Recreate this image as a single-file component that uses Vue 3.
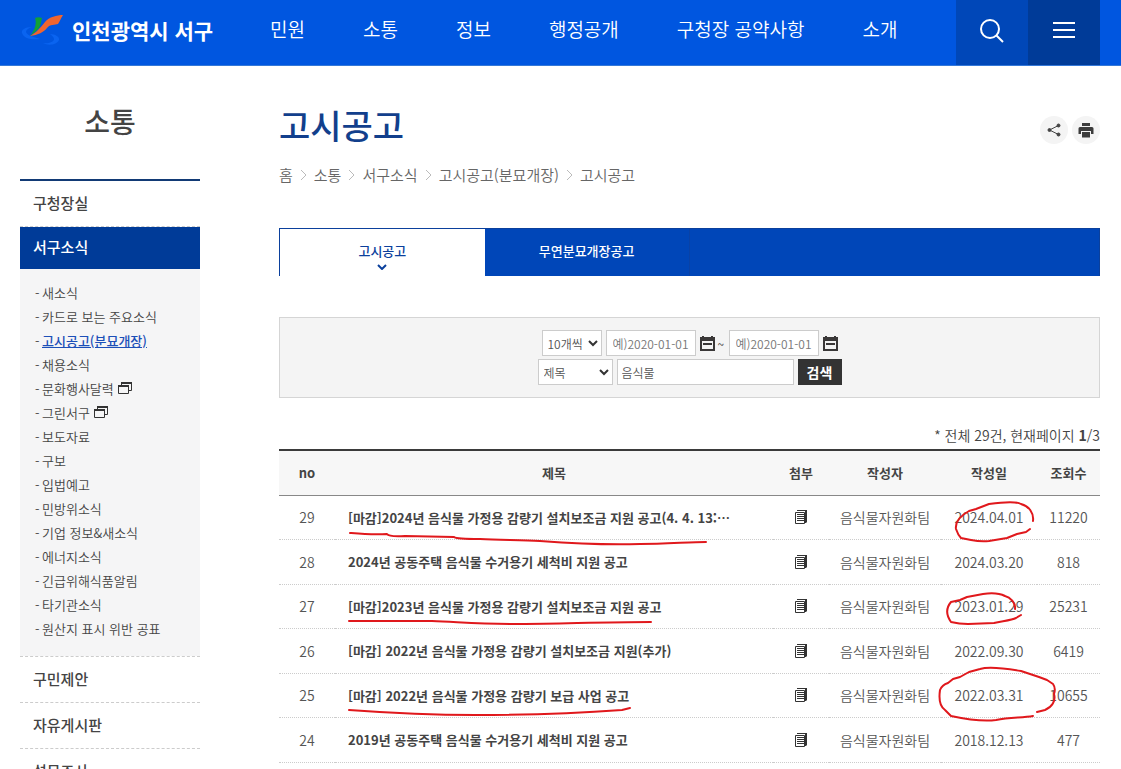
<script setup>
import { ref } from 'vue'

const menus = ['민원', '소통', '정보', '행정공개', '구청장 공약사항', '소개']
const subMenus = [
  { name: '새소식' },
  { name: '카드로 보는 주요소식' },
  { name: '고시공고(분묘개장)', current: true },
  { name: '채용소식' },
  { name: '문화행사달력', external: true },
  { name: '그린서구', external: true },
  { name: '보도자료' },
  { name: '구보' },
  { name: '입법예고' },
  { name: '민방위소식' },
  { name: '기업 정보&새소식' },
  { name: '에너지소식' },
  { name: '긴급위해식품알림' },
  { name: '타기관소식' },
  { name: '원산지 표시 위반 공표' },
]
const crumbs = ['홈', '소통', '서구소식', '고시공고(분묘개장)', '고시공고']
const posts = [
  { no: 29, title: '[마감]2024년 음식물 가정용 감량기 설치보조금 지원 공고(4. 4. 13:…', date: '2024.04.01', hits: 11220 },
  { no: 28, title: '2024년 공동주택 음식물 수거용기 세척비 지원 공고', date: '2024.03.20', hits: 818 },
  { no: 27, title: '[마감]2023년 음식물 가정용 감량기 설치보조금 지원 공고', date: '2023.01.29', hits: 25231 },
  { no: 26, title: '[마감] 2022년 음식물 가정용 감량기 설치보조금 지원(추가)', date: '2022.09.30', hits: 6419 },
  { no: 25, title: '[마감] 2022년 음식물 가정용 감량기 보급 사업 공고', date: '2022.03.31', hits: 10655 },
  { no: 24, title: '2019년 공동주택 음식물 수거용기 세척비 지원 공고', date: '2018.12.13', hits: 477 },
]
const keyword = ref('음식물')
const from = ref('')
const to = ref('')
</script>

<template>
  <div class="page" lang="ko">
    <header class="header">
      <a class="logo" href="#">
        <svg width="44" height="34" viewBox="0 0 44 34" aria-hidden="true">
          <path d="M12 14C5 14 1 17 2 20C4 26 12 27 20 26C15 24 7 23 6 19C6 17 8 15 12 14Z" fill="#0a64f0" />
          <path d="M30 21C35 21 40 24 39 27C37 32 28 33 23 30C28 31 34 29 34 26C34 24 32 23 30 21Z" fill="#0a64f0" />
          <path d="M15 5C17 4 20 4 22 5C21 8 21 12 19 15C16 18 13 21 10 23C15 17 17 10 15 5Z" fill="#12a036" />
          <path d="M43 2C37 2 29 4 25 9C20 15 17 19 10 23C18 22 24 19 27 15C30 11 35 12 38 11C40 8 41 5 43 2Z" fill="#f0652e" />
        </svg>
        <span>인천광역시 서구</span>
      </a>
      <nav class="gnb">
        <a v-for="m in menus" :key="m" href="#">{{ m }}</a>
      </nav>
      <button class="tool search-open" aria-label="검색 열기">
        <svg width="26" height="26" viewBox="0 0 26 26" fill="none" stroke="#fff" stroke-width="2">
          <circle cx="11" cy="11" r="9" />
          <path d="M17 17L24 24" />
        </svg>
      </button>
      <button class="tool menu-open" aria-label="전체메뉴">
        <svg width="22" height="18" viewBox="0 0 22 18" stroke="#fff" stroke-width="2">
          <path d="M0 2H22M0 9H22M0 16H22" />
        </svg>
      </button>
    </header>

    <div class="body">
      <aside class="side">
        <h2>소통</h2>
        <ul class="lnb">
          <li><a href="#">구청장실</a></li>
          <li class="open">
            <a href="#">서구소식</a>
            <ul class="sub">
              <li v-for="s in subMenus" :key="s.name">
                <span class="dash">-</span>
                <a href="#" :class="{ current: s.current }">{{ s.name }}</a>
                <svg v-if="s.external" width="14" height="12" viewBox="0 0 14 12" fill="none" stroke="#333">
                  <path d="M3.500 3V1M13.500 0V8.500H11" />
                  <path d="M3 1H14" stroke-width="2" />
                  <path d="M.5 4V11.500H10.500V4" />
                  <path d="M0 4H11" stroke-width="2" />
                </svg>
              </li>
            </ul>
          </li>
          <li><a href="#">구민제안</a></li>
          <li><a href="#">자유게시판</a></li>
          <li><a href="#">설문조사</a></li>
        </ul>
      </aside>

      <main class="main">
        <div class="heading">
          <h1>고시공고</h1>
          <div class="share">
            <button aria-label="공유">
              <svg width="14" height="14" viewBox="0 0 14 14" fill="#444" stroke="#444">
                <path d="M11.500 2.500L2.500 7L11.500 11.500" fill="none" />
                <circle cx="11.500" cy="2.500" r="1.500" />
                <circle cx="2.500" cy="7" r="1.500" />
                <circle cx="11.500" cy="11.500" r="1.500" />
              </svg>
            </button>
            <button aria-label="인쇄">
              <svg width="16" height="16" viewBox="0 0 16 16" fill="#3c3c3c">
                <path d="M4 1H12V4H4Z" />
                <path d="M2 5H14Q15.500 5 15.500 6.500V12H13V9H3V12H.5V6.500Q.5 5 2 5Z" />
                <path d="M4 10H12V15.500H4Z" />
              </svg>
            </button>
          </div>
        </div>

        <nav class="crumbs" aria-label="현재 위치">
          <template v-for="(c, i) in crumbs" :key="i">
            <svg v-if="i" width="7" height="12" viewBox="0 0 7 12" fill="none" stroke="#bbb">
              <path d="M1 1L6 6L1 11" />
            </svg>
            <a href="#">{{ c }}</a>
          </template>
        </nav>

        <nav class="tabs">
          <a class="on" href="#">
            고시공고
            <svg width="10" height="6" viewBox="0 0 10 6" fill="none" stroke="#0b409c" stroke-width="2">
              <path d="M1 1L5 5L9 1" />
            </svg>
          </a>
          <a href="#">무연분묘개장공고</a>
        </nav>

        <form class="filter" @submit.prevent>
          <div class="line">
            <span class="pick count">
              <select aria-label="목록 개수"><option>10개씩</option></select>
              <svg width="10" height="7" viewBox="0 0 10 7" fill="none" stroke="#333" stroke-width="2"><path d="M1 1L5 5L9 1" /></svg>
            </span>
            <input v-model="from" class="date" type="text" placeholder="예)2020-01-01" aria-label="시작일" />
            <button type="button" class="cal" aria-label="시작일 선택">
              <svg width="15" height="15" viewBox="0 0 15 15"><path d="M0 1H2V0H4V1H11V0H13V1H15V5H0Z" fill="#3a3838" /><path d="M1 4V14H14V4" fill="none" stroke="#3a3838" stroke-width="2" /><path d="M3 8H12" stroke="#3a3838" stroke-width="2" /></svg>
            </button>
            <span class="tilde">~</span>
            <input v-model="to" class="date" type="text" placeholder="예)2020-01-01" aria-label="종료일" />
            <button type="button" class="cal" aria-label="종료일 선택">
              <svg width="15" height="15" viewBox="0 0 15 15"><path d="M0 1H2V0H4V1H11V0H13V1H15V5H0Z" fill="#3a3838" /><path d="M1 4V14H14V4" fill="none" stroke="#3a3838" stroke-width="2" /><path d="M3 8H12" stroke="#3a3838" stroke-width="2" /></svg>
            </button>
          </div>
          <div class="line">
            <span class="pick field">
              <select aria-label="검색 항목"><option>제목</option></select>
              <svg width="10" height="7" viewBox="0 0 10 7" fill="none" stroke="#333" stroke-width="2"><path d="M1 1L5 5L9 1" /></svg>
            </span>
            <input v-model="keyword" class="keyword" type="text" aria-label="검색어" />
            <button class="submit">검색</button>
          </div>
        </form>

        <p class="total">* 전체 29건, 현재페이지 <b>1</b>/3</p>

        <div class="board">
          <table>
            <colgroup>
              <col class="c-no" /><col /><col class="c-file" /><col class="c-dept" /><col class="c-date" /><col class="c-hits" />
            </colgroup>
            <thead>
              <tr><th>no</th><th>제목</th><th>첨부</th><th>작성자</th><th>작성일</th><th>조회수</th></tr>
            </thead>
            <tbody>
              <tr v-for="p in posts" :key="p.no">
                <td>{{ p.no }}</td>
                <td class="title"><a href="#">{{ p.title }}</a></td>
                <td>
                  <svg class="file" width="12" height="14" viewBox="0 0 12 14" fill="none" stroke="#333">
                    <path d="M2.500 .5H11.500V12.500" />
                    <path d="M.5 2.500H9.500V13.500H.5Z" />
                    <path d="M2 .5H12M10.500 1V13M2 4.500H9M2 6.500H9M2 8.500H9M2 10.500H9" />
                  </svg>
                </td>
                <td>음식물자원화팀</td>
                <td>{{ p.date }}</td>
                <td>{{ p.hits }}</td>
              </tr>
            </tbody>
          </table>
          <svg class="ink ink-left" width="440" height="320" viewBox="279 449 440 320" aria-hidden="true">
            <path d="M350 533C362 534 373 535 387 534Q389 537 405 536L454 537Q456 539 480 539C500 540 520 540 540 541C580 544 610 545 640 544C665 544 690 542 706 542" />
            <path d="M349 621C380 621 410 621 432 621C460 622 480 624 520 624C560 624 600 622 651 622" />
            <path d="M349 710C390 713 430 715 475 715C530 715 580 713 622 710L630 708" />
          </svg>
          <svg class="ink ink-right" width="180" height="320" viewBox="920 449 180 320" aria-hidden="true">
            <path d="M1033 521C1034 513 1029 506 1021 504C1016 501 1003 502 989 504L976 509L969 511C960 516 955 522 956 529Q958 535 961 538L971 540Q981 542 989 541L1007 538L1017 534L1026 532L1030 529" />
            <path d="M1015 609C1016 603 1010 597 1005 596C999 593 990 593 983 594L967 597L960 600L951 602C946 608 946 615 951 622Q959 624 968 624L994 623C1003 621 1012 620 1016 618L1021 615" />
            <path d="M1033 716C1022 718 1010 717 996 720C980 722 965 719 951 716L945 710C939 706 939 697 940 690Q942 685 948 683L953 679L960 677L969 672L980 669C990 666 1009 669 1021 671L1033 675L1039 677L1047 680L1053 684Q1056 688 1054 694C1056 701 1052 707 1045 710L1037 712" />
          </svg>
        </div>
      </main>
    </div>
  </div>
</template>

<style>
html {
  scrollbar-width: none;
}
body {
  margin: 0;
  background: #fff;
}
</style>

<style scoped>
.page {
  font-family: "Noto Sans CJK KR", "Noto Sans", sans-serif;
  font-size: 14px;
  font-weight: 350;
  color: #444;
}
.page * {
  box-sizing: border-box;
}
a {
  color: inherit;
  text-decoration: none;
}
ul {
  list-style: none;
  margin: 0;
  padding: 0;
}
h1, h2, p {
  margin: 0;
}
button, input, select {
  font-family: inherit;
  font-weight: inherit;
  margin: 0;
}
button {
  border: 0;
  padding: 0;
  cursor: pointer;
}
.header {
  display: flex;
  height: 66px;
  padding: 0 21px 0 20px;
  background: #0056e0;
  border-bottom: 1px solid #3478d8;
  color: #fff;
}
.logo {
  display: flex;
  align-items: center;
  gap: 8px;
  width: 250px;
  padding-bottom: 6px;
  font-size: 21px;
  font-weight: 700;
  white-space: nowrap;
}
.gnb {
  flex: 1;
  display: flex;
  align-items: center;
  gap: 58px;
  padding-bottom: 8px;
  font-size: 19px;
  white-space: nowrap;
}
.tool {
  display: flex;
  align-items: center;
  justify-content: center;
  width: 72px;
  padding-bottom: 6px;
}
.search-open {
  background: #0047b8;
  padding-top: 2px;
}
.menu-open {
  background: #003b98;
}
.body {
  display: flex;
  align-items: flex-start;
  gap: 79px;
  padding: 0 21px 0 20px;
}
.side {
  flex: 0 0 180px;
}
.side h2 {
  height: 113px;
  padding-top: 34px;
  font-size: 28px;
  line-height: 42px;
  font-weight: 500;
  text-align: center;
}
.lnb {
  border-top: 2px solid #123a75;
}
.lnb > li {
  border-bottom: 1px dashed #ccc;
}
.lnb > li > a {
  display: block;
  padding: 0 13px 2px;
  font-size: 15px;
  line-height: 43px;
  font-weight: 500;
}
.lnb > .open > a {
  background: #003b98;
  color: #fff;
  line-height: 40px;
}
.sub {
  padding: 11px 15px 16px;
  background: #f5f5f6;
}
.sub li {
  display: flex;
  align-items: center;
  height: 24px;
  font-size: 13px;
  white-space: nowrap;
}
.dash {
  width: 7px;
}
.sub svg {
  margin-left: 4px;
}
.sub .current {
  color: #1c4fb8;
  font-weight: 500;
  text-decoration: underline;
}
.main {
  flex: 1;
  min-width: 0;
}
.heading {
  display: flex;
  justify-content: space-between;
  align-items: center;
  height: 56px;
  margin-top: 31px;
}
.heading h1 {
  font-size: 34px;
  line-height: 50px;
  font-weight: 500;
  color: #123f8c;
}
.share {
  display: flex;
  gap: 4px;
  padding-top: 10px;
}
.share button {
  display: flex;
  align-items: center;
  justify-content: center;
  width: 28px;
  height: 28px;
  border-radius: 50%;
  background: #f4f4f4;
}
.crumbs {
  display: flex;
  align-items: center;
  gap: 7px;
  margin-top: 10px;
  font-size: 15px;
  line-height: 24px;
  color: #666;
}
.tabs {
  display: flex;
  height: 48px;
  margin-top: 41px;
  background: #0046b8;
  border: 1px solid #0b409c;
  border-bottom: 0;
}
.tabs a {
  display: flex;
  flex-direction: column;
  align-items: center;
  width: 25%;
  padding-top: 12px;
  border-right: 1px solid #0942a6;
  font-size: 13px;
  line-height: 20px;
  font-weight: 500;
  color: #fff;
}
.tabs .on {
  background: #fff;
  border-right: 0;
  color: #0b409c;
}
.tabs svg {
  margin-top: 3px;
}
.filter {
  display: flex;
  flex-direction: column;
  align-items: center;
  gap: 3px;
  margin-top: 41px;
  padding: 12px 0;
  background: #f4f4f4;
  border: 1px solid #d5d5d5;
}
.line {
  display: flex;
  align-items: center;
  gap: 4px;
}
.pick {
  position: relative;
  display: flex;
}
.pick svg {
  position: absolute;
  right: 4px;
  top: 10px;
  pointer-events: none;
}
select, input {
  height: 26px;
  border: 1px solid #ccc;
  border-radius: 0;
  background: #fff;
  font-size: 12px;
  color: #555;
}
select {
  appearance: none;
  width: 100%;
  padding: 0 5px;
}
input {
  padding: 0 4px;
}
input::placeholder {
  color: #777;
}
.count {
  width: 60px;
}
.field {
  width: 75px;
}
.date {
  width: 90px;
  padding: 0 6px;
}
.cal {
  display: flex;
  background: none;
}
.tilde {
  width: 8px;
  margin: 0 -1px;
  font-size: 12px;
}
.keyword {
  width: 177px;
}
.submit {
  width: 44px;
  height: 26px;
  background: #333;
  color: #fff;
  font-size: 14px;
  font-weight: 700;
}
.total {
  margin-top: 25px;
  line-height: 24px;
  text-align: right;
}
.total b {
  font-weight: 700;
}
.board {
  position: relative;
  margin-top: 2px;
}
table {
  width: 100%;
  table-layout: fixed;
  border-collapse: separate;
  border-spacing: 0;
  border-top: 2px solid #3b3b3b;
}
.c-no {
  width: 56px;
}
.c-file {
  width: 56px;
}
.c-dept {
  width: 112px;
}
.c-date {
  width: 96px;
}
.c-hits {
  width: 63px;
}
th {
  height: 45px;
  padding: 0 0 2px;
  background: #f7f7f7;
  border-bottom: 1px solid #888;
  font-size: 13px;
  font-weight: 700;
}
td {
  height: 44px;
  padding: 0 0 1px;
  border-bottom: 1px dotted #ccc;
  text-align: center;
  white-space: nowrap;
  color: #555;
}
tr:nth-child(even) td {
  height: 45px;
}
.title {
  padding: 0 13px 1px;
  text-align: left;
  font-size: 13px;
  font-weight: 700;
  color: #444;
}
.file {
  display: block;
  margin: 0 auto;
}
.ink {
  position: absolute;
  top: 0;
  fill: none;
  stroke: #e0181c;
  stroke-width: 2;
  stroke-linecap: round;
  stroke-linejoin: round;
  pointer-events: none;
}
.ink-left {
  left: 0;
}
.ink-right {
  right: 0;
}
</style>
